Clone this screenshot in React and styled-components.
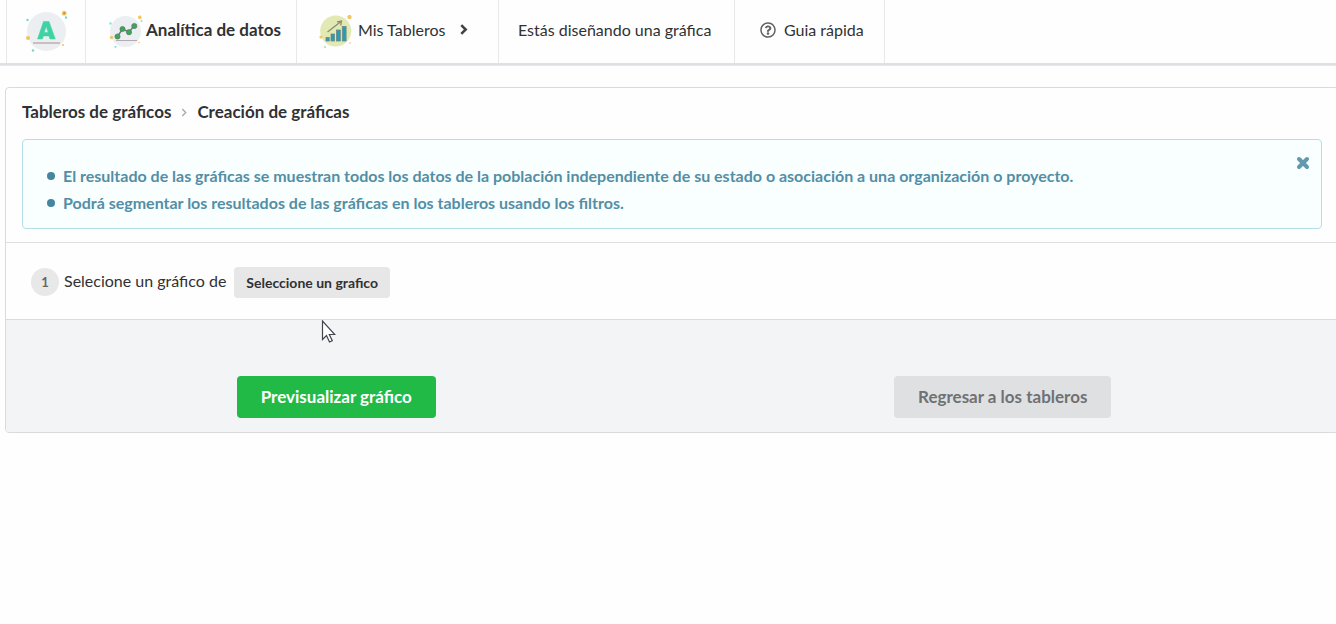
import React from "react";
import styled, { createGlobalStyle } from "styled-components";
import { FaRegQuestionCircle } from "react-icons/fa";

const GlobalStyle = createGlobalStyle`
  * { box-sizing: border-box; }
  body {
    margin: 0;
    background: #fefefe;
    color: #303133;
    font-family: Lato, "Liberation Sans", sans-serif;
    font-size: 16px;
    line-height: 20px;
    overflow-x: hidden;
  }
`;

const Page = styled.div`
  position: relative;
  min-height: 100vh;
  overflow: hidden;
`;

const Header = styled.nav`
  display: flex;
  height: 66px;
  padding-left: 6px;
  border-bottom: 1px solid #e9e9ec;
  box-shadow: inset 0 -2px 0 #e0e0e4;
`;

const Item = styled.a`
  display: flex;
  align-items: center;
  gap: ${(p) => p.$gap || 2}px;
  min-width: ${(p) => p.$min || 80}px;
  height: 63px;
  padding: 0 15px 4px ${(p) => p.$left || 18}px;
  border-right: 1px solid #e8e8eb;
  color: #303133;
  font-size: ${(p) => (p.$strong ? 17 : 16)}px;
  font-weight: ${(p) => (p.$strong ? 700 : 400)};
  text-decoration: none;
  white-space: nowrap;

  &:first-child {
    border-left: 1px solid #e8e8eb;
  }
`;

const Submenu = styled.span`
  display: flex;
  padding: 0 12px;
`;

const Panel = styled.section`
  margin: 21px -3px 0 5px;
  border: 1px solid #d9dadb;
  border-radius: 4px;
`;

const PanelTop = styled.div`
  padding: 14px 16px 13px;
`;

const Breadcrumb = styled.nav`
  display: flex;
  align-items: center;
  gap: 10px;
  margin-bottom: 17px;
  font-size: 17px;
  font-weight: 700;
`;

const Crumb = styled.a`
  color: #303133;
  text-decoration: none;
`;

const Message = styled.div`
  display: flex;
  justify-content: space-between;
  align-items: flex-start;
  padding: 22px 11px 12px 24px;
  border: 1px solid #b5dfe8;
  border-radius: 4px;
  background: #f9fffe;
  color: #528ea6;
`;

const Notes = styled.ul`
  margin: 0;
  padding: 0;
  list-style: none;
  font-weight: 700;
  line-height: 27px;
`;

const Note = styled.li`
  display: flex;
  align-items: center;
  gap: 8px;

  &::before {
    content: "";
    width: 8px;
    height: 8px;
    border-radius: 50%;
    background: #4585a0;
  }
`;

const Close = styled.button`
  display: flex;
  margin-top: -6px;
  padding: 0;
  border: 0;
  background: none;
  color: #6299ae;
`;

const Step = styled.div`
  display: flex;
  align-items: center;
  gap: 5px;
  height: 77px;
  padding: 2px 25px 0;
  border-top: 1px solid #dedfdf;
`;

const StepNumber = styled.span`
  width: 28px;
  height: 28px;
  border-radius: 50%;
  background: #e8e8e8;
  color: #666;
  font-size: 13px;
  font-weight: 700;
  line-height: 28px;
  text-align: center;
`;

const StepText = styled.span`
  padding: 0 3px 2px 0;
`;

const Picker = styled.button`
  height: 31px;
  padding: 0 12px;
  border: 0;
  border-radius: 4px;
  background: #e7e7e7;
  color: #303133;
  font-family: inherit;
  font-size: 14px;
  font-weight: 700;
`;

const Actions = styled.div`
  padding: 56px 0 14px;
  border-top: 1px solid #dbdcdd;
  border-radius: 0 0 3px 3px;
  background: #f3f4f6;
`;

const ActionGrid = styled.div`
  display: grid;
  grid-template-columns: 1fr 1fr;
  justify-items: center;
  margin: 0 2px 0 -3px;
`;

const Action = styled.button`
  height: 42px;
  padding: 0 24px 2px;
  border: 0;
  border-radius: 4px;
  background: ${(p) => (p.$primary ? "#22ba46" : "#dfe0e2")};
  color: ${(p) => (p.$primary ? "#fff" : "#707174")};
  font-family: inherit;
  font-size: 17px;
  font-weight: 700;
`;

const Pointer = styled.svg`
  position: absolute;
  left: 321px;
  top: 320px;
  pointer-events: none;
`;

function Confetti() {
  return (
    <>
      <g fill="#f0c35c">
        <rect x="36" y="2" width="4.500" height="4.500" rx="1.500" />
        <circle cx="2" cy="29" r="2" />
        <circle cx="37" cy="36" r="1" />
      </g>
      <g fill="#6fdcbd">
        <circle cx="1.500" cy="11" r="1.200" />
        <circle cx="40" cy="8.500" r="1.200" />
        <circle cx="7" cy="41.500" r="1.200" />
      </g>
    </>
  );
}

function BrandLogo() {
  return (
    <svg width="42" height="44" viewBox="-1 -1 42 44" aria-label="Inicio" role="img">
      <circle cx="20.500" cy="22.500" r="19.500" fill="#ebeff1" />
      <path d="M17.500 12.500h5.500l6.300 17.500h-5.300l-1-3h-5.600l-1 3h-4.900zM20.200 17.500l-2 6h4z" fill="#3fd3a2" fillRule="evenodd" stroke="#3fd3a2" strokeWidth=".5" strokeLinejoin="round" />
      <path d="M7 34h27" stroke="#b99c9d" strokeWidth="1.200" />
      <Confetti />
      <rect x="37.500" y="3.500" width="1.500" height="1.500" fill="#b77b2c" />
    </svg>
  );
}

function DataIcon() {
  return (
    <svg width="40" height="36" viewBox="0 -1 40 36" aria-hidden="true">
      <circle cx="21.500" cy="18.500" r="15.500" fill="#ebeff1" />
      <path d="M13.500 23.500l5-7.500 6.500 3 5-6" fill="none" stroke="#777b7d" strokeWidth="1.500" />
      <g fill="#35a85a" stroke="#64776b" strokeWidth=".7">
        <circle cx="13.500" cy="23.500" r="2.600" />
        <circle cx="18.500" cy="16" r="2.600" />
        <circle cx="25" cy="19.200" r="2.600" />
        <circle cx="30.300" cy="13" r="2.600" />
      </g>
      <path d="M12 27.500h21" stroke="#b7a8b2" />
      <g fill="#f2c565">
        <rect x="34" y="2.500" width="3.500" height="3.500" rx="1.500" />
        <circle cx="7.500" cy="24.500" r="1.700" />
        <circle cx="35" cy="29.500" r=".8" />
      </g>
      <g fill="#86e2de">
        <circle cx="6.500" cy="10.500" r="1.200" />
        <circle cx="37.500" cy="8" r="1" />
        <circle cx="11.500" cy="33.800" r="1.100" />
      </g>
    </svg>
  );
}

function BoardIcon() {
  return (
    <svg width="40" height="38" viewBox="-1 0 40 38" aria-hidden="true">
      <circle cx="18.700" cy="20" r="15.500" fill="#e3e9b3" />
      <g fill="#299db1" stroke="#6e8987" strokeWidth=".8">
        <rect x="9" y="26.500" width="3.200" height="3.500" />
        <rect x="14" y="23" width="3.500" height="7" />
        <rect x="19.500" y="19" width="3.800" height="11" />
        <rect x="25.300" y="15.500" width="3.800" height="14.500" />
      </g>
      <path d="M10.500 21L24 10.500M20 10.800l4.500-.8-.8 4.500" fill="none" stroke="#8a8d75" strokeWidth="1.300" />
      <g fill="#f2c565">
        <rect x="30.500" y="4" width="4" height="4" rx="1.500" />
        <circle cx="4" cy="26" r="1.600" />
        <circle cx="33" cy="32" r=".8" />
      </g>
      <circle cx="8" cy="36" r="1.100" fill="#b8dfb4" />
    </svg>
  );
}

function Chevron({ width, height, weight, color }) {
  return (
    <svg width={width} height={height} viewBox="0 0 7 10" aria-hidden="true">
      <path d="M1.500 1l4 4-4 4" fill="none" stroke={color} strokeWidth={weight} />
    </svg>
  );
}

export default function App() {
  return (
    <>
      <GlobalStyle />
      <Page>
        <Header>
          <Item href="#"><BrandLogo /></Item>
          <Item href="#datos" $strong $min={211}><DataIcon />Analítica de datos</Item>
          <Item href="#tableros" $left={19} $min={202}>
            <BoardIcon />Mis Tableros
            <Submenu><Chevron width={9} height={11} weight={2.3} color="#404144" /></Submenu>
          </Item>
          <Item as="span" $left={19} $min={236}>Estás diseñando una gráfica</Item>
          <Item href="#guia" $left={25} $gap={8} $min={150}><FaRegQuestionCircle size={16} color="#606164" />Guia rápida</Item>
        </Header>

        <Panel>
          <PanelTop>
            <Breadcrumb aria-label="Ruta">
              <Crumb href="#tableros">Tableros de gráficos</Crumb>
              <Chevron width={6} height={9} weight={1.6} color="#aaa" />
              <span>Creación de gráficas</span>
            </Breadcrumb>
            <Message>
              <Notes>
                <Note>El resultado de las gráficas se muestran todos los datos de la población independiente de su estado o asociación a una organización o proyecto.</Note>
                <Note>Podrá segmentar los resultados de las gráficas en los tableros usando los filtros.</Note>
              </Notes>
              <Close type="button" aria-label="Cerrar">
                <svg width="14" height="14" viewBox="0 0 14 14" aria-hidden="true">
                  <path d="M3 3l8 8M11 3l-8 8" stroke="currentColor" strokeWidth="4" strokeLinecap="round" />
                </svg>
              </Close>
            </Message>
          </PanelTop>

          <Step>
            <StepNumber>1</StepNumber>
            <StepText>Selecione un gráfico de</StepText>
            <Picker type="button">Seleccione un grafico</Picker>
          </Step>

          <Actions>
            <ActionGrid>
              <Action type="button" $primary>Previsualizar gráfico</Action>
              <Action type="button">Regresar a los tableros</Action>
            </ActionGrid>
          </Actions>
        </Panel>

        <Pointer width="15" height="25" viewBox="0 0 15 25" aria-hidden="true">
          <path d="M1.500 1v18.500l4-4 3 6.500 2.800-1.200-3-6.300h5.500z" fill="#fff" stroke="#444450" strokeWidth="1.200" />
        </Pointer>
      </Page>
    </>
  );
}
